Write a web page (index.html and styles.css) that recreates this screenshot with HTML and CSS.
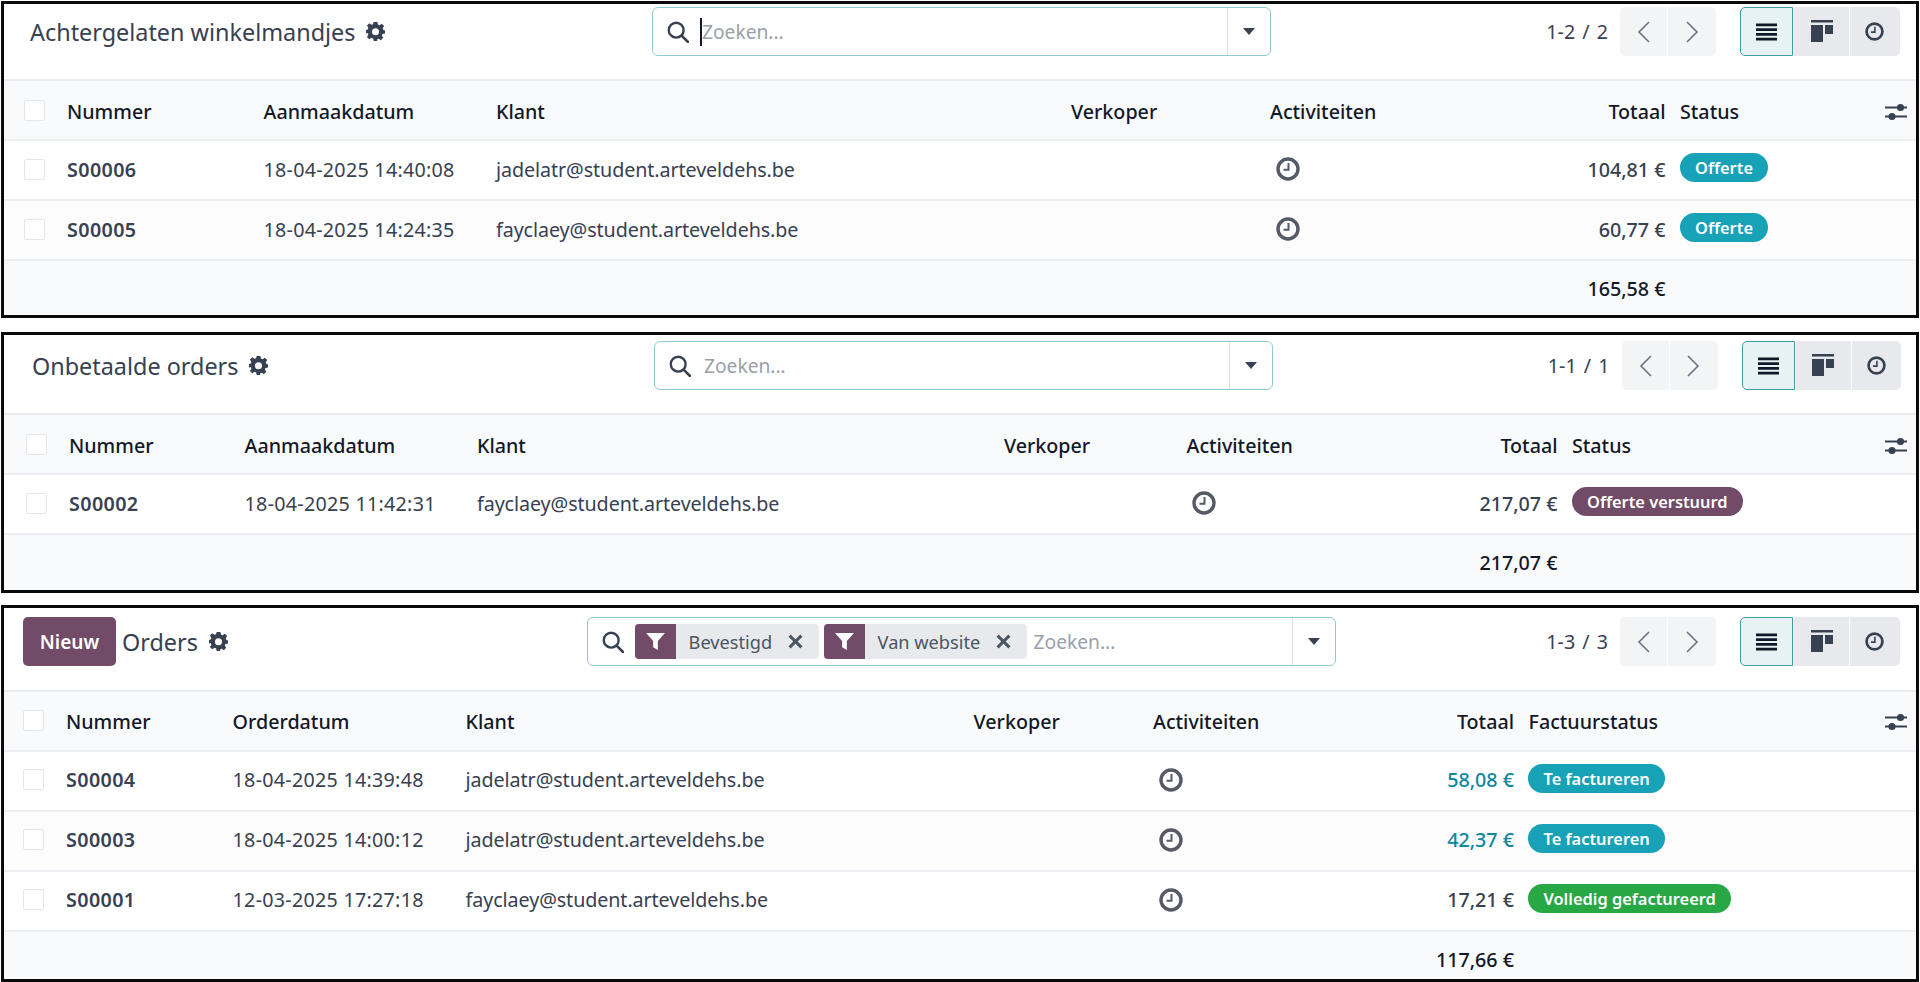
FILE: index.html
```html
<!DOCTYPE html>
<html lang="nl">
<head>
<meta charset="utf-8">
<title>Orders</title>
<link rel="stylesheet" href="styles.css">
</head>
<body>
<svg class="defs" aria-hidden="true">
  <symbol id="i-search" viewBox="0 0 22 22"><circle cx="9.2" cy="9.2" r="7.4" fill="none" stroke="currentColor" stroke-width="2.4"/><path d="M14.6 14.6 21 21" fill="none" stroke="currentColor" stroke-width="2.6" stroke-linecap="round"/></symbol>
  <symbol id="i-gear" viewBox="0 0 20 20"><path fill-rule="evenodd" fill="currentColor" d="M8 0h4l.6 2.7 1.7.7L16.700 1.900 19.100 4.300 17.600 6.700l.7 1.700L20 9v3l-2.700.6-.7 1.700 1.500 2.400-2.400 2.400-2.400-1.500-1.700.7L11.900 20H8.100l-.6-2.700-1.700-.7-2.400 1.500-2.400-2.400 1.500-2.400-.7-1.700L0 12V8.500l1.800-.6.700-1.700L1 3.800 3.400 1.400 5.800 2.900l1.700-.5zM10 6.500a3.700 3.700 0 1 0 0 7.400 3.700 3.700 0 0 0 0-7.400z"/></symbol>
  <symbol id="i-caret" viewBox="0 0 12 7"><path d="M0 0h12L6 7z" fill="currentColor"/></symbol>
  <symbol id="i-prev" viewBox="0 0 13 22"><path d="M12 1 2 11l10 10" fill="none" stroke="currentColor" stroke-width="1.6"/></symbol>
  <symbol id="i-next" viewBox="0 0 13 22"><path d="m1 1 10 10L1 21" fill="none" stroke="currentColor" stroke-width="1.6"/></symbol>
  <symbol id="i-list" viewBox="0 0 22 18"><path d="M0 0h22v3H0zM0 5h22v3H0zM0 10h22v3H0zM0 15h22v3H0z" fill="currentColor"/></symbol>
  <symbol id="i-kanban" viewBox="0 0 22 22"><path d="M0 0h22v2.500H0zM0 5h12v17H0zM14 5h8v9h-8z" fill="currentColor"/></symbol>
  <symbol id="i-clock" viewBox="0 0 24 24"><circle cx="12" cy="12" r="10" fill="none" stroke="currentColor" stroke-width="3.400"/><path d="M12.500 6v6.800H7.500" fill="none" stroke="currentColor" stroke-width="2"/></symbol>
  <symbol id="i-sliders" viewBox="0 0 22 20"><path d="M0 4.500h22v2H0zM0 13.500h22v2H0z" fill="currentColor"/><circle cx="15.500" cy="5.500" r="3.600" fill="currentColor"/><circle cx="7" cy="14.500" r="3.600" fill="currentColor"/></symbol>
  <symbol id="i-filter" viewBox="0 0 20 18"><path d="M0 0h20l-7.500 8.500V18l-5-3V8.500z" fill="currentColor"/></symbol>
  <symbol id="i-x" viewBox="0 0 14 14"><path d="m1.500 1.500 11 11m0-11-11 11" fill="none" stroke="currentColor" stroke-width="2.800"/></symbol>
</svg>

<section class="panel panel-a">
  <header class="bar">
    <div class="heading"><h1 class="title title-a">Achtergelaten winkelmandjes</h1><svg class="gear"><use href="#i-gear"/></svg></div>
    <div class="search">
      <svg class="search-icon"><use href="#i-search"/></svg>
      <span class="cursor"></span>
      <span class="placeholder placeholder-a">Zoeken...</span>
      <span class="drop"><svg class="caret"><use href="#i-caret"/></svg></span>
    </div>
    <div class="tools">
      <span class="count">1-2 / 2</span>
      <div class="pager"><span class="page-btn"><svg class="chev"><use href="#i-prev"/></svg></span><span class="page-btn"><svg class="chev"><use href="#i-next"/></svg></span></div>
      <div class="views"><span class="view view-active"><svg class="vi-list"><use href="#i-list"/></svg></span><span class="view view-kanban"><svg class="vi-kanban"><use href="#i-kanban"/></svg></span><span class="view view-activity"><svg class="vi-clock"><use href="#i-clock"/></svg></span></div>
    </div>
  </header>
  <div class="row head">
    <span class="cell"><i class="check"></i></span><span>Nummer</span><span>Aanmaakdatum</span><span>Klant</span><span>Verkoper</span><span>Activiteiten</span><span class="num">Totaal</span>
    <span class="status-head">Status<svg class="sliders"><use href="#i-sliders"/></svg></span>
  </div>
  <div class="row">
    <span class="cell"><i class="check"></i></span><b class="ref">S00006</b><span class="date">18-04-2025 14:40:08</span><span class="client">jadelatr@student.arteveldehs.be</span><span></span><span><svg class="clock"><use href="#i-clock"/></svg></span><span class="num amount">104,81 €</span>
    <span class="status"><span class="pill pill-info">Offerte</span></span>
  </div>
  <div class="row alt">
    <span class="cell"><i class="check"></i></span><b class="ref">S00005</b><span class="date">18-04-2025 14:24:35</span><span class="client">fayclaey@student.arteveldehs.be</span><span></span><span><svg class="clock"><use href="#i-clock"/></svg></span><span class="num amount">60,77 €</span>
    <span class="status"><span class="pill pill-info">Offerte</span></span>
  </div>
  <div class="row foot"><span class="num sum">165,58 €</span></div>
</section>

<section class="panel panel-b">
  <header class="bar">
    <div class="heading"><h1 class="title title-b">Onbetaalde orders</h1><svg class="gear"><use href="#i-gear"/></svg></div>
    <div class="search">
      <svg class="search-icon"><use href="#i-search"/></svg>
      <span class="placeholder placeholder-b">Zoeken...</span>
      <span class="drop"><svg class="caret"><use href="#i-caret"/></svg></span>
    </div>
    <div class="tools">
      <span class="count">1-1 / 1</span>
      <div class="pager"><span class="page-btn"><svg class="chev"><use href="#i-prev"/></svg></span><span class="page-btn"><svg class="chev"><use href="#i-next"/></svg></span></div>
      <div class="views"><span class="view view-active"><svg class="vi-list"><use href="#i-list"/></svg></span><span class="view view-kanban"><svg class="vi-kanban"><use href="#i-kanban"/></svg></span><span class="view view-activity"><svg class="vi-clock"><use href="#i-clock"/></svg></span></div>
    </div>
  </header>
  <div class="row head">
    <span class="cell"><i class="check"></i></span><span>Nummer</span><span>Aanmaakdatum</span><span>Klant</span><span>Verkoper</span><span>Activiteiten</span><span class="num">Totaal</span>
    <span class="status-head">Status<svg class="sliders"><use href="#i-sliders"/></svg></span>
  </div>
  <div class="row">
    <span class="cell"><i class="check"></i></span><b class="ref">S00002</b><span class="date">18-04-2025 11:42:31</span><span class="client">fayclaey@student.arteveldehs.be</span><span></span><span><svg class="clock"><use href="#i-clock"/></svg></span><span class="num amount">217,07 €</span>
    <span class="status"><span class="pill pill-primary">Offerte verstuurd</span></span>
  </div>
  <div class="row foot"><span class="num sum">217,07 €</span></div>
</section>

<section class="panel panel-c">
  <header class="bar">
    <div class="heading"><button class="new">Nieuw</button><h1 class="title title-c">Orders</h1><svg class="gear"><use href="#i-gear"/></svg></div>
    <div class="search">
      <svg class="search-icon"><use href="#i-search"/></svg>
      <span class="facet facet-a"><span class="facet-tag"><svg class="funnel"><use href="#i-filter"/></svg></span><span class="facet-label">Bevestigd</span><svg class="facet-x"><use href="#i-x"/></svg></span>
      <span class="facet facet-b"><span class="facet-tag"><svg class="funnel"><use href="#i-filter"/></svg></span><span class="facet-label">Van website</span><svg class="facet-x"><use href="#i-x"/></svg></span>
      <span class="placeholder placeholder-c">Zoeken...</span>
      <span class="drop"><svg class="caret"><use href="#i-caret"/></svg></span>
    </div>
    <div class="tools">
      <span class="count">1-3 / 3</span>
      <div class="pager"><span class="page-btn"><svg class="chev"><use href="#i-prev"/></svg></span><span class="page-btn"><svg class="chev"><use href="#i-next"/></svg></span></div>
      <div class="views"><span class="view view-active"><svg class="vi-list"><use href="#i-list"/></svg></span><span class="view view-kanban"><svg class="vi-kanban"><use href="#i-kanban"/></svg></span><span class="view view-activity"><svg class="vi-clock"><use href="#i-clock"/></svg></span></div>
    </div>
  </header>
  <div class="row head">
    <span class="cell"><i class="check"></i></span><span>Nummer</span><span>Orderdatum</span><span>Klant</span><span>Verkoper</span><span>Activiteiten</span><span class="num">Totaal</span>
    <span class="status-head">Factuurstatus<svg class="sliders"><use href="#i-sliders"/></svg></span>
  </div>
  <div class="row">
    <span class="cell"><i class="check"></i></span><b class="ref">S00004</b><span class="date">18-04-2025 14:39:48</span><span class="client">jadelatr@student.arteveldehs.be</span><span></span><span><svg class="clock"><use href="#i-clock"/></svg></span><span class="num amount amount-due">58,08 €</span>
    <span class="status"><span class="pill pill-info">Te factureren</span></span>
  </div>
  <div class="row alt">
    <span class="cell"><i class="check"></i></span><b class="ref">S00003</b><span class="date">18-04-2025 14:00:12</span><span class="client">jadelatr@student.arteveldehs.be</span><span></span><span><svg class="clock"><use href="#i-clock"/></svg></span><span class="num amount amount-due">42,37 €</span>
    <span class="status"><span class="pill pill-info">Te factureren</span></span>
  </div>
  <div class="row">
    <span class="cell"><i class="check"></i></span><b class="ref">S00001</b><span class="date">12-03-2025 17:27:18</span><span class="client">fayclaey@student.arteveldehs.be</span><span></span><span><svg class="clock"><use href="#i-clock"/></svg></span><span class="num amount">17,21 €</span>
    <span class="status"><span class="pill pill-success">Volledig gefactureerd</span></span>
  </div>
  <div class="row foot"><span class="num sum">117,66 €</span></div>
</section>
</body>
</html>
```

FILE: styles.css
```css
* { box-sizing: border-box; }
html, body { margin: 0; padding: 0; background: #fff; }
body {
  padding: 1px 1px 0;
  font-family: "Noto Sans", "Liberation Sans", sans-serif;
  font-size: 19.7px;
  color: #374151;
  overflow: hidden;
}
.defs { width: 0; height: 0; position: absolute; }

.panel { border: 3px solid #0a0a0a; background: #fff; display: flex; flex-direction: column; }
.panel-a { height: 317px; margin-bottom: 14px; --cols: 63px 196.5px 232.5px 575px 199px 150px 245.5px 1fr; --check: 20px; --bar: 77.3px; --left: 648px; --search: 618.5px; --top: 3px; --right: 16.5px; }
.panel-b { height: 261px; margin-bottom: 12px; --cols: 65px 175.6px 232.4px 527px 182.5px 150px 221px 1fr; --check: 22px; --bar: 80.4px; --left: 650px; --search: 619px; --top: 6px; --right: 15px; }
.panel-c { height: 377px; --cols: 62px 166.6px 233px 508px 179.4px 150px 211px 1fr; --check: 19px; --bar: 83.5px; --left: 582.6px; --search: 749.4px; --top: 9px; --right: 16.5px; }

.bar {
  height: var(--bar);
  flex: none;
  padding-top: var(--top);
  display: grid;
  grid-template-columns: var(--left) var(--search) 1fr;
  align-items: start;
  border-bottom: 2px solid #e9ebee;
}
.heading { height: 49px; display: flex; align-items: center; }
.title { margin: 0; font-size: 23.4px; font-weight: 400; color: #374151; line-height: 30px; }
.title-a { margin-left: 26px; }
.title-b { margin-left: 28px; }
.title-c { margin-left: 6px; }
.gear { width: 19px; height: 19px; margin-left: 11px; color: #374151; }
.new {
  margin: 0 0 0 19px;
  width: 93px;
  height: 49px;
  border: 0;
  border-radius: 5px;
  background: #714b67;
  color: #fff;
  font: 600 19px "Noto Sans", "Liberation Sans", sans-serif;
}

.search {
  height: 49px;
  display: flex;
  align-items: center;
  border: 1.5px solid #8ccacd;
  border-radius: 6px;
  padding-left: 14px;
  position: relative;
}
.search-icon { width: 22px; height: 22px; color: #374151; flex: none; }
.cursor { width: 2px; height: 28px; background: #111827; margin-left: 11px; }
.placeholder { color: #9aa0a9; font-size: 19.2px; }
.placeholder-b { margin-left: 13px; }
.placeholder-c { margin-left: 7px; }
.drop {
  margin-left: auto;
  width: 43px;
  height: 100%;
  border-left: 1px solid #dfe1e5;
  display: flex;
  align-items: center;
  justify-content: center;
}
.caret { width: 12px; height: 7px; color: #374151; }

.facet { height: 35px; display: flex; align-items: center; background: #e7e9ed; border-radius: 4px; flex: none; font-size: 18.2px; color: #4b5563; }
.facet-a { margin-left: 11px; width: 184px; }
.facet-b { margin-left: 5px; width: 203px; }
.facet-tag { height: 35px; width: 41px; background: #714b67; border-radius: 4px 0 0 4px; display: flex; align-items: center; justify-content: center; }
.funnel { width: 19px; height: 17px; color: #fff; }
.facet-label { margin-left: 13px; }
.facet-x { width: 15px; height: 15px; color: #4b5563; margin-left: auto; margin-right: 16px; }

.tools { height: 49px; display: flex; align-items: center; justify-content: flex-end; padding-right: var(--right); }
.count { color: #374151; margin-right: 12px; word-spacing: 2px; }
.pager { display: flex; margin-right: 24px; }
.page-btn { width: 48px; height: 49px; background: #f3f4f6; display: flex; align-items: center; justify-content: center; }
.page-btn:first-child { border-radius: 5px 0 0 5px; border-right: 1px solid #fff; }
.page-btn:last-child { border-radius: 0 5px 5px 0; }
.chev { width: 13px; height: 22px; color: #6b7280; }
.views { display: flex; }
.view { height: 49px; display: flex; align-items: center; justify-content: center; background: #e7e9ed; color: #374151; }
.view-active { width: 53px; background: #e6f2f3; border: 1.5px solid #3f9ea3; border-radius: 5px 0 0 5px; color: #111827; }
.view-kanban { width: 55px; margin-left: 1px; }
.view-activity { width: 49.5px; margin-left: 1px; border-radius: 0 5px 5px 0; }
.vi-list { width: 21px; height: 18px; }
.vi-kanban { width: 22px; height: 22px; margin-bottom: 2px; }
.vi-clock { width: 19px; height: 19px; }

.row {
  height: 60px;
  flex: none;
  display: grid;
  grid-template-columns: var(--cols);
  align-items: center;
  border-bottom: 2px solid #eceef1;
}
.ref { font-weight: 600; letter-spacing: .4px; margin-bottom: 2px; }
.date { letter-spacing: .27px; margin-bottom: 2px; }
.client { letter-spacing: -.08px; margin-bottom: 2px; }
.head { background: #f9fafb; color: #111827; font-weight: 500; padding-top: 2px; }
.alt { background: #fcfcfd; }
.foot { flex: 1; height: auto; background: #f9fafb; border-bottom: 0; align-items: start; padding-top: 16px; line-height: 24px; }
.foot .sum { grid-column: 7; color: #111827; font-weight: 500; }
.cell { padding-left: var(--check); display: flex; }
.check { width: 21px; height: 21px; background: #fff; border: 1.5px solid #e4e6ea; border-radius: 2px; margin-bottom: 2px; }
.num { text-align: right; }
.amount { font-weight: 500; margin-bottom: 2px; }
.amount-due { color: #0d86a0; }
.clock { width: 24px; height: 24px; display: block; margin-left: 6px; margin-bottom: 2px; color: #555a66; }
.status { padding-left: 14.5px; display: flex; }
.status-head { padding: 0 9px 0 14.5px; display: flex; align-items: center; justify-content: space-between; }
.sliders { width: 22px; height: 20px; margin-top: 1px; color: #374151; }
.pill { height: 29px; padding: 0 15px; border-radius: 15px; color: #fff; font-size: 16.4px; font-weight: 600; display: flex; align-items: center; margin-bottom: 5px; }
.pill-info { background: #17a2b8; }
.pill-primary { background: #714b67; }
.pill-success { background: #28a745; }
```
